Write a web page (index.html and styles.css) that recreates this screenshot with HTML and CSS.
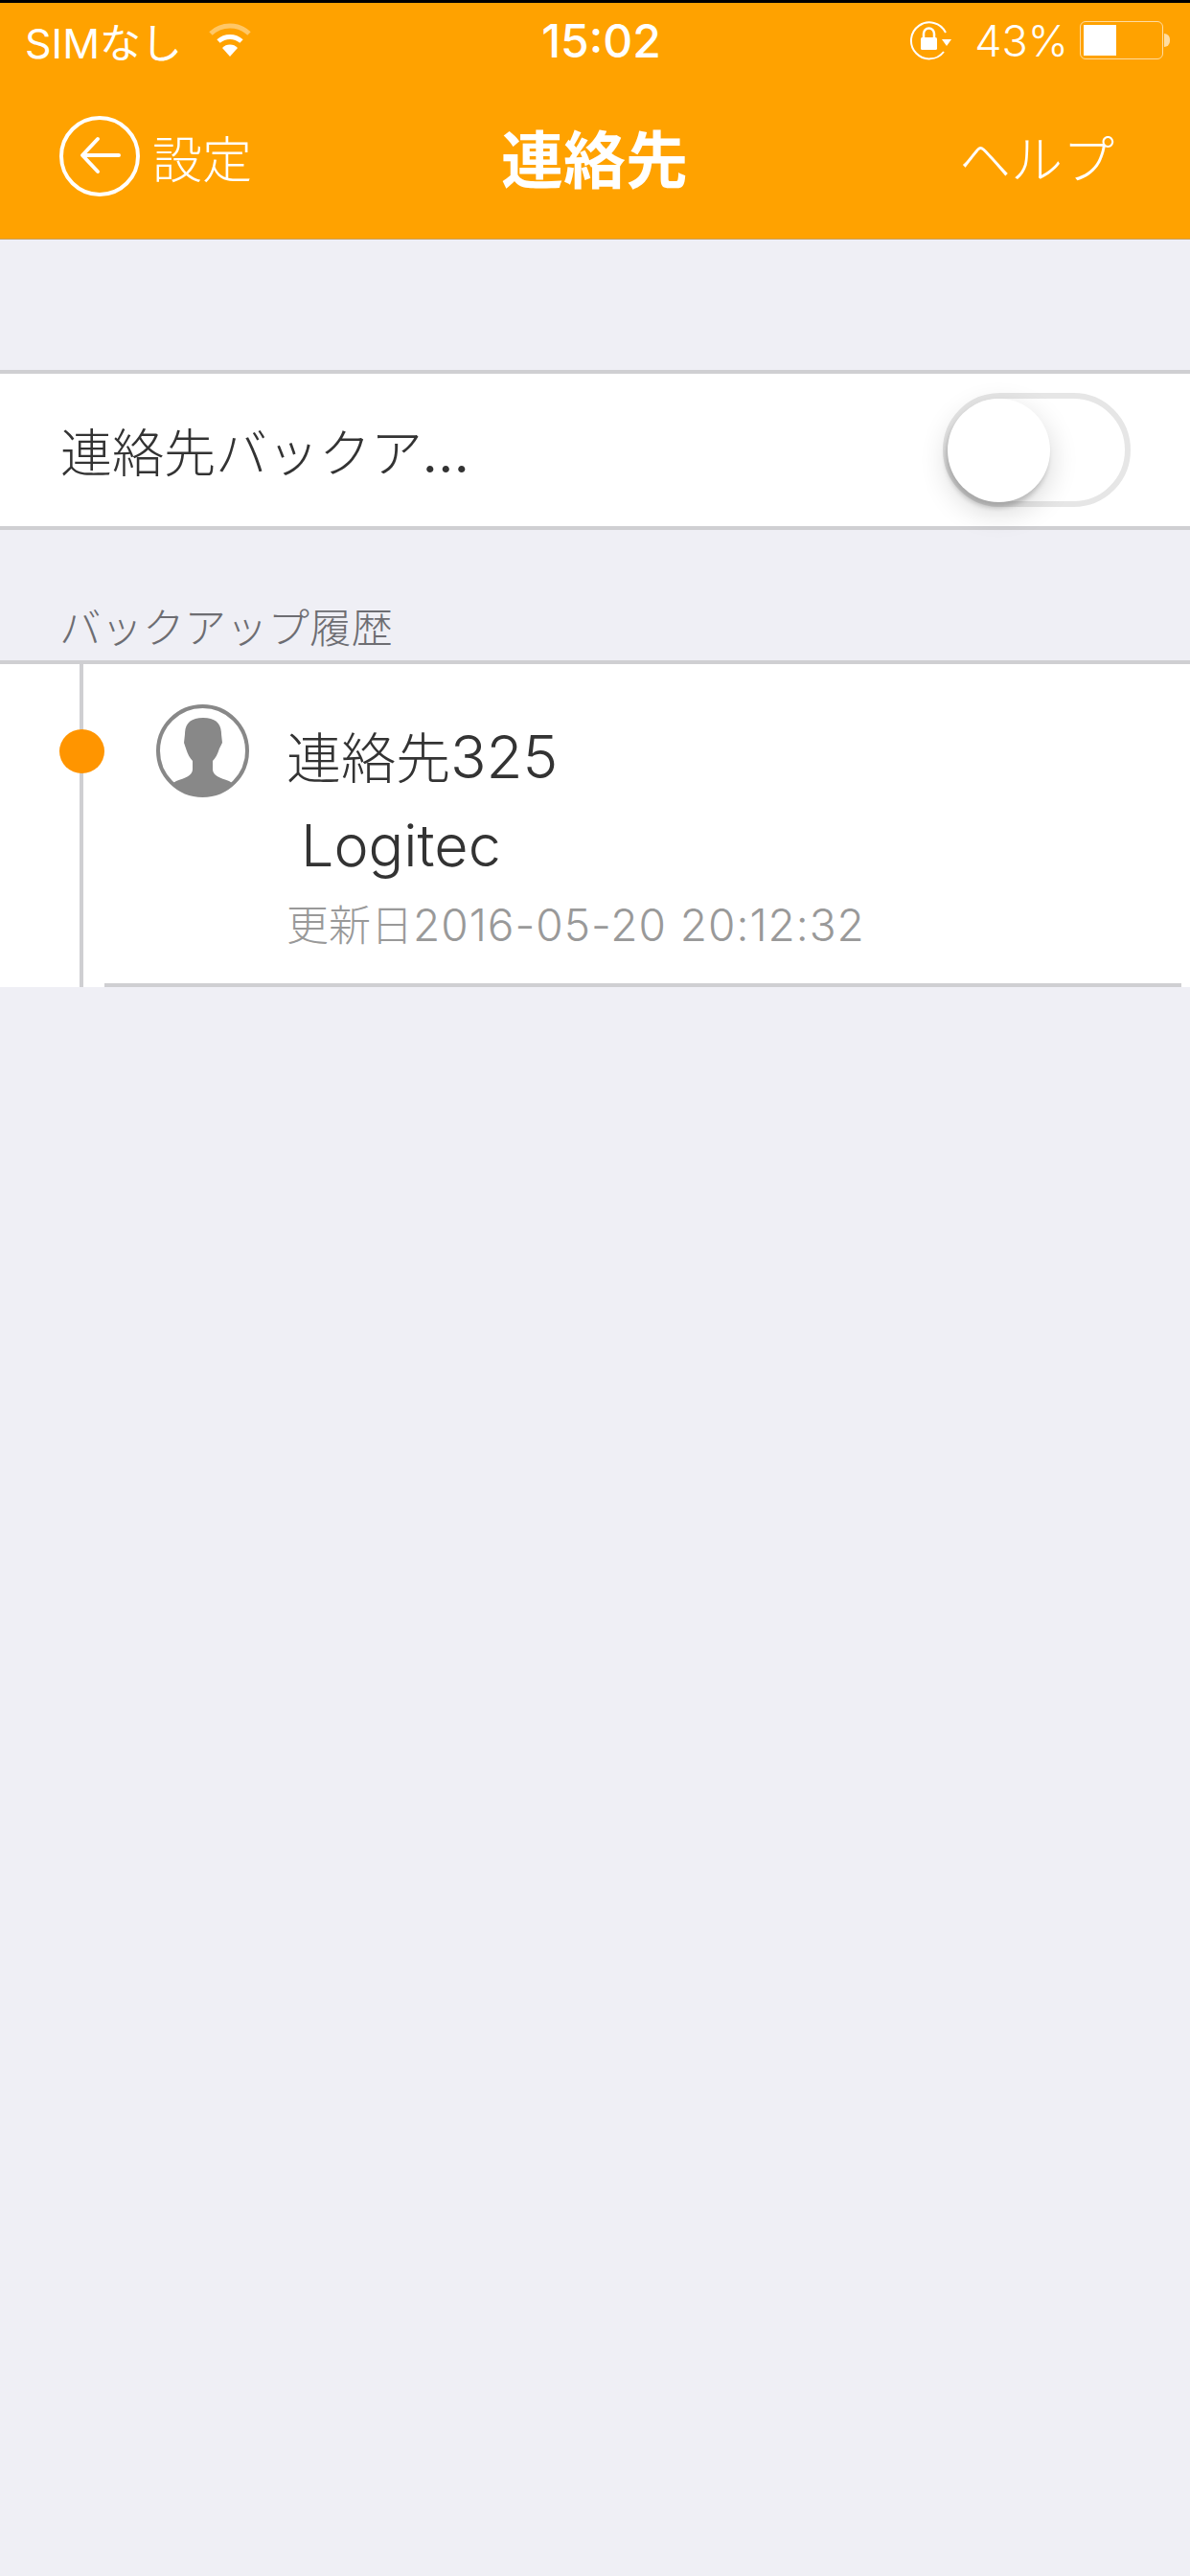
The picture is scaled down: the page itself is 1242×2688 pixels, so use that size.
FILE: index.html
```html
<!doctype html>
<html lang="ja">

<head>
    <meta charset="UTF-8">
    <meta name="viewport" content="width=device-width, initial-scale=1.0">
    <title>連絡先</title>
    <link rel="stylesheet" href="styles.css">
</head>

<body>
    <header class="head">
        <div class="status">
            <div class="status-left">
                <span>SIMなし</span>
                <svg class="wifi" width="46" height="36" viewBox="0 0 46 36">
                    <path d="M3 11 A29 29 0 0 1 43 11" fill="none" stroke="#fff" stroke-opacity=".4" stroke-width="5" />
                    <path d="M11 19 A18 18 0 0 1 35 19" fill="none" stroke="#fff" stroke-width="5" />
                    <path d="M15 26 A11 11 0 0 1 31 26 L23 35 Z" fill="#fff" />
                </svg>
            </div>
            <div class="time">15:02</div>
            <div class="status-right">
                <svg class="rotlock" width="44" height="42" viewBox="0 0 44 42">
                    <path d="M38 13 A19 19 0 1 0 36 33" fill="none" stroke="#fff" stroke-width="2" />
                    <path d="M34 20 L44 20 L39 27 Z" fill="#fff" />
                    <rect x="12" y="18" width="17" height="13" rx="1.5" fill="#fff" />
                    <path d="M15 18 V14 A5.5 5.5 0 0 1 26 14 V18" fill="none" stroke="#fff" stroke-width="2.5" />
                </svg>
                <span>43%</span>
                <div class="battery">
                    <div class="battery-body">
                        <div class="battery-fill"></div>
                    </div>
                    <div class="battery-nub"></div>
                </div>
            </div>
        </div>
        <nav class="nav">
            <div class="back">
                <svg width="84" height="84" viewBox="0 0 84 84">
                    <circle cx="42" cy="42" r="40" fill="none" stroke="#fff" stroke-width="4" />
                    <path d="M62 41 H25 M40 24 L24 41 L40 58" fill="none" stroke="#fff" stroke-width="4" stroke-linecap="round" stroke-linejoin="round" />
                </svg>
                <span>設定</span>
            </div>
            <h1 class="title">連絡先</h1>
            <div class="help">ヘルプ</div>
        </nav>
    </header>

    <section class="backup-row">
        <span class="backup-label">連絡先バックア<span class="dots">...</span></span>
        <div class="switch">
            <div class="knob"></div>
        </div>
    </section>

    <div class="section-title">バックアップ履歴</div>

    <section class="history">
        <div class="rail">
            <div class="dot"></div>
        </div>
        <svg class="avatar" width="97" height="97" viewBox="0 0 97 97">
            <defs>
                <clipPath id="face">
                    <circle cx="48.5" cy="48.5" r="47" />
                </clipPath>
            </defs>
            <path clip-path="url(#face)" fill="#888" d="M49 14 C36 14 30 20 30 31 L29 40 L31 46 C33 52 35 56 38 59 L38 68 C38 74 30 77 21 80 L8 88 L8 97 L89 97 L89 88 L76 80 C67 77 59 74 59 68 L59 59 C62 56 64 52 66 46 L69 40 L68 31 C68 20 62 14 49 14 Z" />
            <circle cx="48.5" cy="48.5" r="46.5" fill="none" stroke="#888" stroke-width="4" />
        </svg>
        <div class="info">
            <div class="name">連絡先<span class="num">325</span></div>
            <div class="device">Logitec</div>
            <div class="updated">更新日<span class="stamp">2016-05-20 20:12:32</span></div>
        </div>
    </section>
</body>

</html>
```

FILE: styles.css
```css
* {
    margin: 0;
    padding: 0;
    box-sizing: border-box;
}

body {
    width: 1242px;
    height: 2688px;
    background: #efeff5;
    font-family: Inter, "Noto Sans CJK JP", sans-serif;
    color: #333;
    overflow: hidden;
}

.head {
    height: 250px;
    border-top: 3px solid #000;
    border-bottom: 1px solid #c9a060;
    background: #ffa200;
    color: #fff;
}

.status {
    display: grid;
    grid-template-columns: 1fr auto 1fr;
    align-items: center;
    height: 78px;
    padding: 0 21px 0 26px;
    font-size: 43px;
}

.status-left {
    display: flex;
    align-items: center;
    gap: 27px;
}

.time {
    font-size: 48px;
    font-weight: 500;
    margin-left: 8px;
}

.status-right {
    display: flex;
    align-items: center;
    justify-content: flex-end;
    gap: 12px;
}

.status-right span {
    margin: 0 0 0 12px;
    font-size: 45px;
    font-weight: 300;
}

.battery {
    display: flex;
    align-items: center;
    gap: 1px;
}

.battery-body {
    width: 87px;
    height: 40px;
    padding: 3px;
    border: 1.5px solid #ffdca0;
    border-radius: 6px;
}

.battery-fill {
    width: 34px;
    height: 100%;
    background: #fff;
}

.battery-nub {
    width: 6px;
    height: 14px;
    border-radius: 0 7px 7px 0;
    background: #ffdca0;
}

.nav {
    display: grid;
    grid-template-columns: 1fr auto 1fr;
    align-items: center;
    height: 164px;
    padding: 0 79px 0 62px;
}

.back {
    display: flex;
    align-items: center;
    gap: 13px;
    font-size: 52px;
    font-weight: 300;
}

.title {
    font-size: 65px;
    font-weight: 700;
    margin-left: 16px;
}

.help {
    text-align: right;
    font-size: 54px;
    font-weight: 300;
}

.backup-row {
    display: flex;
    align-items: center;
    justify-content: space-between;
    height: 167px;
    margin-top: 136px;
    padding: 0 62px 0 63px;
    border-top: 4px solid #cfcfd2;
    border-bottom: 4px solid #cfcfd2;
    background: #fff;
}

.backup-label {
    font-size: 54px;
    font-weight: 300;
}

.dots {
    letter-spacing: 1px;
    font-weight: 400;
}

.switch {
    display: flex;
    align-items: center;
    width: 196px;
    height: 119px;
    border: 6px solid #e6e6e6;
    border-radius: 60px;
}

.knob {
    width: 107px;
    height: 108px;
    margin-left: -1px;
    border-radius: 50%;
    background: #fff;
    box-shadow: -2px 6px 5px rgba(0, 0, 0, .18), 0 10px 30px rgba(0, 0, 0, .16);
}

.section-title {
    height: 136px;
    padding: 75px 0 0 62px;
    font-size: 43.5px;
    line-height: 54px;
    font-weight: 300;
    color: #6d6d72;
}

.history {
    position: relative;
    display: flex;
    height: 341px;
    border-top: 4px solid #cfcfd2;
    background: #fff;
}

/* separator under the entry */
.history::after {
    content: "";
    position: absolute;
    left: 109px;
    right: 9px;
    bottom: 0;
    height: 4px;
    background: #cfcfd2;
}

.rail {
    position: relative;
    flex: none;
    width: 163px;
}

.rail::before {
    content: "";
    position: absolute;
    left: 83px;
    top: 0;
    bottom: 0;
    width: 4px;
    background: #cfcfd2;
}

.dot {
    position: absolute;
    left: 62px;
    top: 68px;
    width: 47px;
    height: 46px;
    border-radius: 50%;
    background: #ff9500;
}

.avatar {
    flex: none;
    margin-top: 42px;
}

.info {
    margin: 0 0 0 39px;
    padding-top: 62px;
}

.name {
    height: 78px;
    font-size: 57px;
    line-height: 70px;
    font-weight: 300;
}

.num {
    font-size: 62px;
}

.device {
    height: 94px;
    padding: 14px 0 0 15px;
    font-size: 61px;
    line-height: 70px;
    font-weight: 300;
}

.updated {
    margin-top: 12px;
    font-size: 44px;
    line-height: 52px;
    font-weight: 300;
    color: #999;
}

.stamp {
    font-size: 46px;
    letter-spacing: 1px;
}
```
